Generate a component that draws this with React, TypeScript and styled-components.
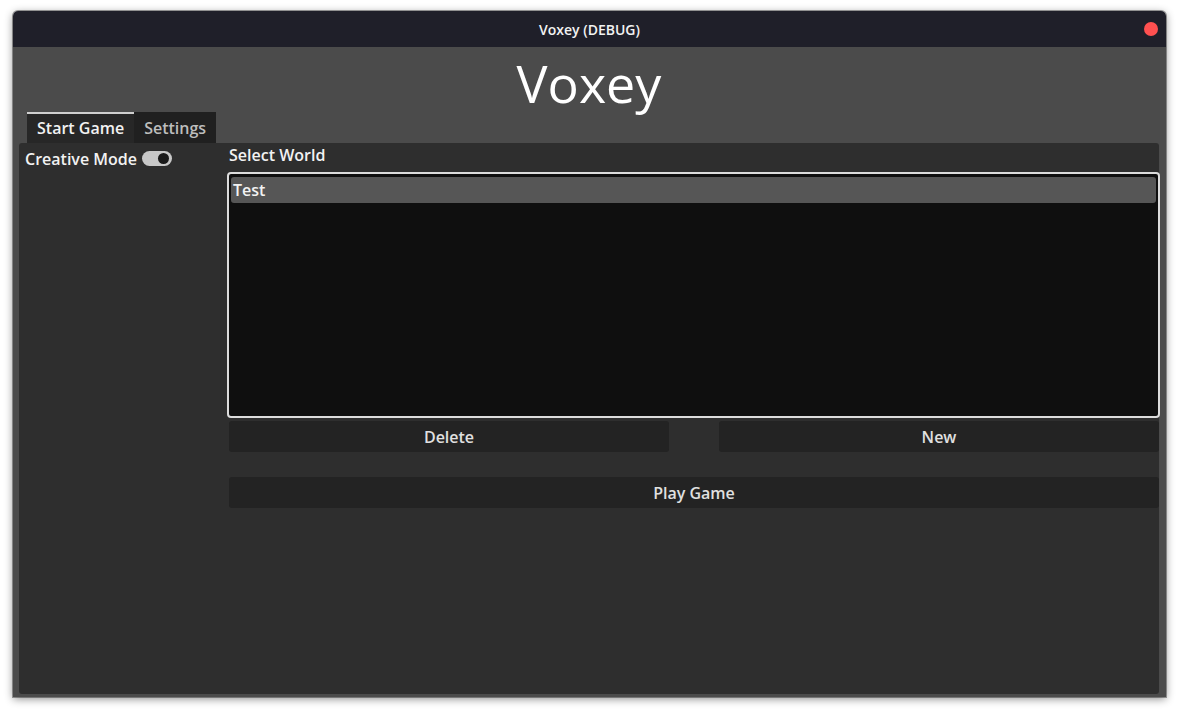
import React from "react";
import styled, { createGlobalStyle } from "styled-components";

const Global = createGlobalStyle`
  html, body { margin: 0; padding: 0; background: #ffffff; }
  body { font-family: "Open Sans", "Noto Sans", sans-serif; }
  * { box-sizing: border-box; }
`;

const Page = styled.div`
  width: 1180px;
  height: 713px;
  padding: 11px 14px 16px 13px;
`;

const Window = styled.div`
  width: 1153px;
  height: 686px;
  display: flex;
  flex-direction: column;
  border-radius: 5px 5px 0 0;
  overflow: hidden;
  box-shadow: 0 2px 8px rgba(0, 0, 0, 0.45), 0 0 0 1px rgba(0, 0, 0, 0.35);
`;

const TitleBar = styled.div`
  height: 36px;
  flex: none;
  background: #1f1f29;
  display: flex;
  align-items: center;
  justify-content: center;
  position: relative;
  color: #f2f2f2;
  font-size: 14px;
  font-weight: 600;
`;

const CloseDot = styled.div`
  position: absolute;
  right: 8px;
  top: 11px;
  width: 14px;
  height: 14px;
  border-radius: 50%;
  background: #ff5050;
`;

const Body = styled.div`
  flex: 1;
  background: #4b4b4b;
  display: flex;
  flex-direction: column;
  padding: 0 7px 3px 6px;
`;

const Heading = styled.h1`
  margin: 0;
  height: 65px;
  display: flex;
  align-items: center;
  justify-content: center;
  color: #ffffff;
  font-size: 52px;
  font-weight: 500;
  padding-top: 6px;
`;

const Tabs = styled.div`
  display: flex;
  margin-left: 8px;
  height: 31px;
`;

const Tab = styled.div<{ $active?: boolean }>`
  height: 31px;
  padding: 0 10px;
  display: flex;
  align-items: center;
  font-size: 16px;
  font-weight: 600;
  background: ${(p) => (p.$active ? "#272727" : "#202020")};
  color: ${(p) => (p.$active ? "#f2f2f2" : "#bdbdbd")};
  border-top: 2px solid ${(p) => (p.$active ? "#cfcfcf" : "transparent")};
  padding-bottom: 2px;
`;

const Panel = styled.div`
  flex: 1;
  background: #2e2e2e;
  border-radius: 3px;
  display: flex;
`;

const Sidebar = styled.div`
  width: 210px;
  flex: none;
  padding: 6px 0 0 6px;
`;

const OptionRow = styled.div`
  display: flex;
  align-items: center;
  gap: 5px;
  height: 20px;
  color: #f2f2f2;
  font-size: 16px;
  font-weight: 600;
`;

const Toggle = styled.div`
  width: 30px;
  height: 15px;
  border-radius: 8px;
  background: #c8c8c8;
  position: relative;
  margin-top: -2px;
`;

const Knob = styled.div`
  position: absolute;
  right: 3px;
  top: 2px;
  width: 11px;
  height: 11px;
  border-radius: 50%;
  background: #1a1a1a;
`;

const Main = styled.div`
  flex: 1;
  display: flex;
  flex-direction: column;
`;

const Label = styled.div`
  height: 29px;
  display: flex;
  align-items: center;
  color: #f2f2f2;
  font-size: 16px;
  font-weight: 600;
  padding-bottom: 5px;
`;

const WorldList = styled.div`
  height: 246px;
  margin: 0 -1px 0 -2px;
  border: 2px solid #dcdcdc;
  border-radius: 4px;
  background: #0f0f0f;
  padding: 3px 2px;
`;

const WorldItem = styled.div<{ $selected?: boolean }>`
  height: 26px;
  display: flex;
  align-items: center;
  padding: 0 2px;
  border-radius: 3px;
  background: ${(p) => (p.$selected ? "#565656" : "transparent")};
  color: #f2f2f2;
  font-size: 16px;
  font-weight: 600;
`;

const ButtonRow = styled.div`
  display: flex;
  gap: 50px;
  margin-top: 3px;
`;

const Button = styled.button`
  flex: 1;
  height: 31px;
  border: none;
  border-radius: 3px;
  background: #232323;
  color: #e0e0e0;
  font-family: "Open Sans", "Noto Sans", sans-serif;
  font-size: 16px;
  font-weight: 600;
  padding: 0;
`;

const WideButton = styled(Button)`
  flex: none;
  width: 100%;
  margin-top: 25px;
`;

export default function App() {
  return (
    <>
      <Global />
      <Page>
        <Window>
          <TitleBar>
            Voxey (DEBUG)
            <CloseDot />
          </TitleBar>
          <Body>
            <Heading>Voxey</Heading>
            <Tabs>
              <Tab $active>Start Game</Tab>
              <Tab>Settings</Tab>
            </Tabs>
            <Panel>
              <Sidebar>
                <OptionRow>
                  Creative Mode
                  <Toggle>
                    <Knob />
                  </Toggle>
                </OptionRow>
              </Sidebar>
              <Main>
                <Label>Select World</Label>
                <WorldList>
                  <WorldItem $selected>Test</WorldItem>
                </WorldList>
                <ButtonRow>
                  <Button>Delete</Button>
                  <Button>New</Button>
                </ButtonRow>
                <WideButton>Play Game</WideButton>
              </Main>
            </Panel>
          </Body>
        </Window>
      </Page>
    </>
  );
}
